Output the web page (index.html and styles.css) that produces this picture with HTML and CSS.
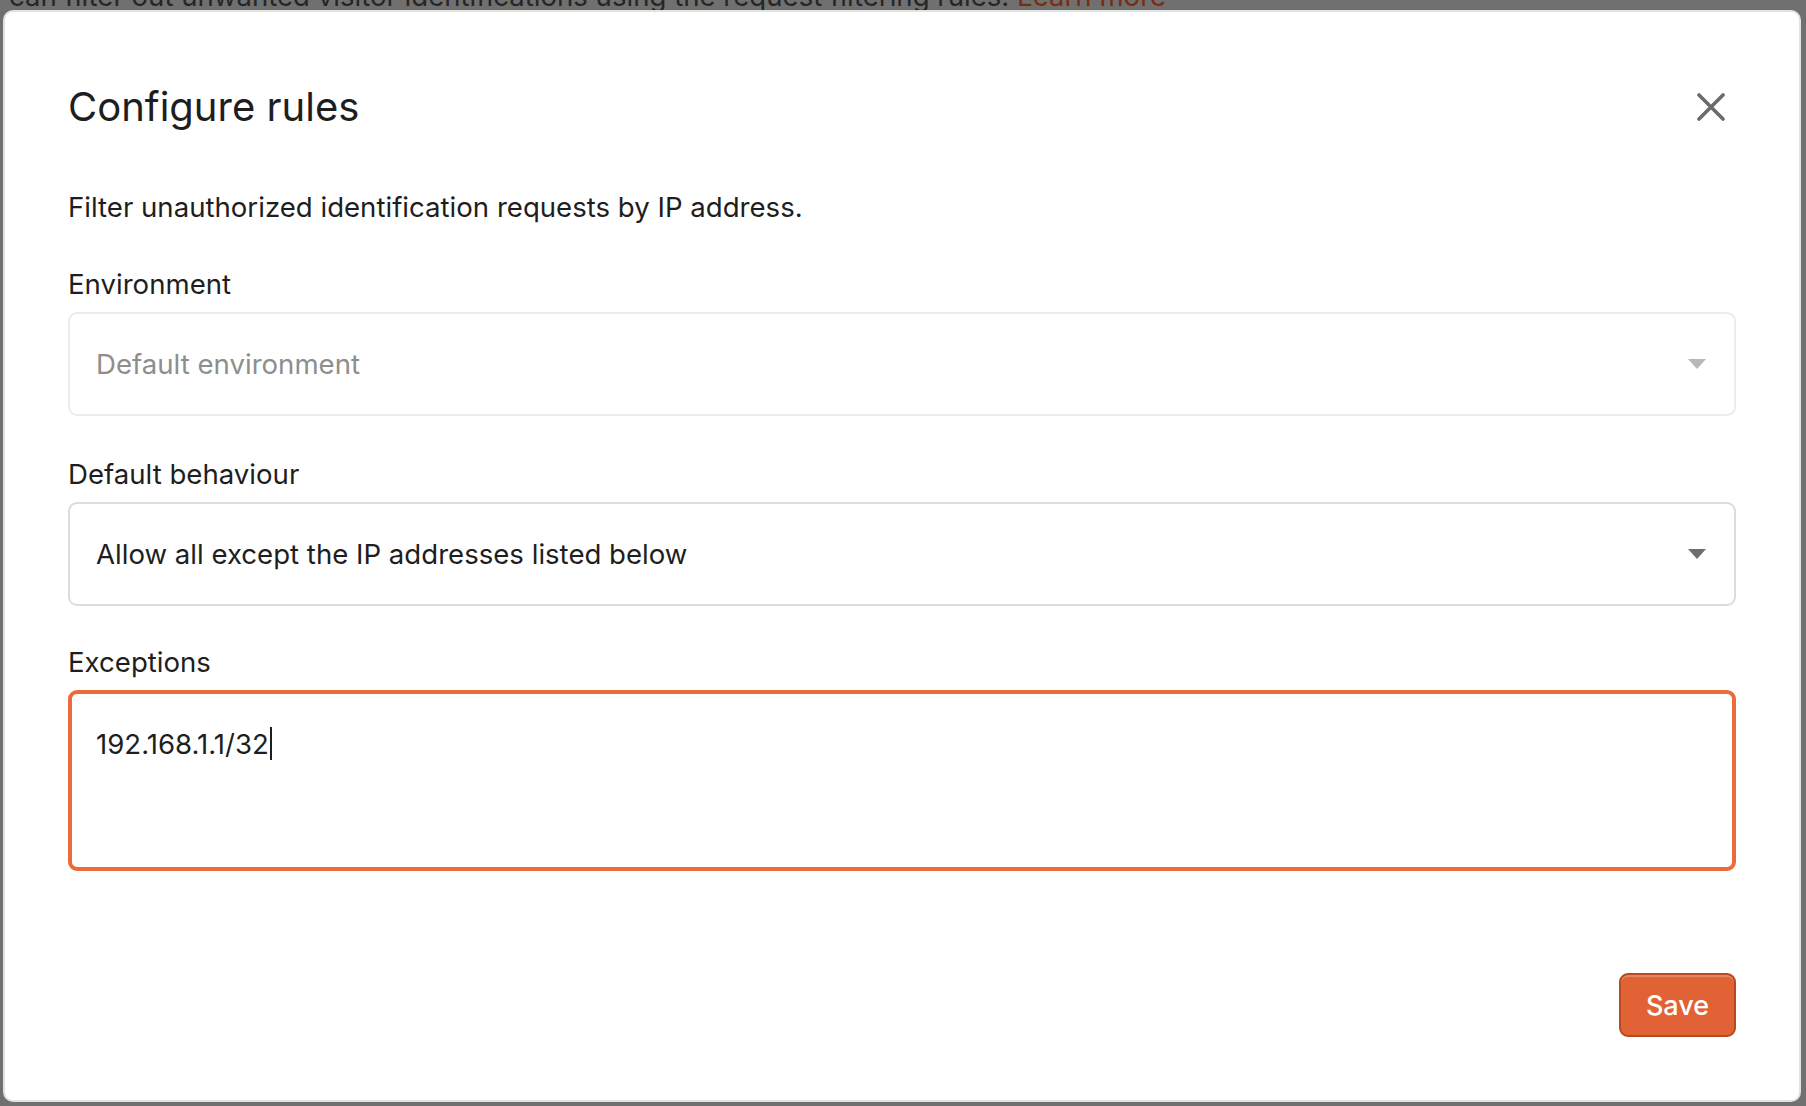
FILE: index.html
```html
<!DOCTYPE html>
<html lang="en">
<head>
<meta charset="utf-8">
<title>Configure rules</title>
<link rel="stylesheet" href="styles.css">
</head>
<body>
<div class="page">
  <p class="page-text">can filter out unwanted visitor identifications using the request filtering rules. <a class="page-link" href="#">Learn more</a></p>
</div>
<div class="overlay">
  <div class="modal" role="dialog" aria-labelledby="modal-title">
    <div class="modal-header">
      <h2 class="modal-title" id="modal-title">Configure rules</h2>
      <button class="close-btn" type="button" aria-label="Close">
        <svg width="28" height="28" viewBox="0 0 28 28" aria-hidden="true">
          <path d="M2 2 L26 26 M26 2 L2 26" stroke="#6b6b6b" stroke-width="3.6" stroke-linecap="round" fill="none"/>
        </svg>
      </button>
    </div>
    <p class="modal-desc">Filter unauthorized identification requests by IP address.</p>

    <div class="field field-env">
      <div class="field-label">Environment</div>
      <div class="select select-disabled">
        <span class="select-value placeholder">Default environment</span>
        <span class="select-arrow arrow-light"></span>
      </div>
    </div>

    <div class="field field-behaviour">
      <div class="field-label">Default behaviour</div>
      <div class="select">
        <span class="select-value">Allow all except the IP addresses listed below</span>
        <span class="select-arrow"></span>
      </div>
    </div>

    <div class="field field-exceptions">
      <div class="field-label">Exceptions</div>
      <div class="textarea"><span class="textarea-text">192.168.1.1/32</span><span class="caret"></span></div>
    </div>

    <div class="modal-footer">
      <button class="save-btn" type="button">Save</button>
    </div>
  </div>
</div>
</body>
</html>
```

FILE: styles.css
```css
html, body {
  margin: 0;
  padding: 0;
  height: 100%;
}

body {
  background: #707070;
  font-family: "Inter", "Liberation Sans", sans-serif;
  overflow: hidden;
}

.page {
  padding: 0 9px;
}

.page-text {
  margin: -20px 0 0 0;
  font-size: 27.6px;
  line-height: 33px;
  color: #262626;
  white-space: nowrap;
}

.page-link {
  color: #7a2c10;
  text-decoration: none;
}

.overlay {
  position: fixed;
  top: 10px;
  left: 3px;
  right: 5px;
  bottom: 4px;
}

.modal {
  box-sizing: border-box;
  height: 100%;
  background: #ffffff;
  border: 2px solid #e2e2df;
  border-radius: 10px;
  padding: 70px 63px 0 63px;
  display: flex;
  flex-direction: column;
}

.modal-header {
  display: flex;
  align-items: center;
  justify-content: space-between;
  height: 50px;
}

.modal-title {
  margin: 0;
  font-size: 40px;
  font-weight: 400;
  line-height: 50px;
  color: #1e1e1e;
}

.close-btn {
  width: 48px;
  height: 48px;
  padding: 0;
  margin-right: 1px;
  border: none;
  background: transparent;
  display: flex;
  align-items: center;
  justify-content: center;
}

.modal-desc {
  margin: 57px 0 0 0;
  font-size: 27.6px;
  line-height: 36px;
  color: #1e1e1e;
}

.field {
  display: flex;
  flex-direction: column;
}

.field-env {
  margin-top: 41px;
}

.field-behaviour {
  margin-top: 40px;
}

.field-exceptions {
  margin-top: 38px;
}

.field-label {
  font-size: 27.6px;
  line-height: 36px;
  color: #1e1e1e;
  margin-bottom: 10px;
}

.select {
  box-sizing: border-box;
  height: 104px;
  border: 2px solid #dcdcdc;
  border-radius: 9px;
  display: flex;
  align-items: center;
  justify-content: space-between;
  padding: 0 28px 0 26px;
}

.select-disabled {
  border-color: #ececec;
}

.select-value {
  font-size: 27.6px;
  line-height: 36px;
  color: #1e1e1e;
}

.placeholder {
  color: #8e8e8e;
}

.select-arrow {
  width: 0;
  height: 0;
  border-left: 9.5px solid transparent;
  border-right: 9.5px solid transparent;
  border-top: 10px solid #6e6e6e;
}

.arrow-light {
  border-top-color: #b8b8b8;
}

.textarea {
  box-sizing: border-box;
  height: 181px;
  border: 4px solid #ec6b3a;
  border-radius: 9px;
  padding: 32px 24px 0 24px;
  font-size: 27.6px;
  line-height: 36px;
  color: #1e1e1e;
  display: flex;
  align-items: flex-start;
}

.caret {
  display: inline-block;
  width: 2px;
  height: 33px;
  margin-top: 1px;
  margin-left: 1px;
  background: #1e1e1e;
}

.modal-footer {
  margin-top: 102px;
  display: flex;
  justify-content: flex-end;
}

.save-btn {
  box-sizing: border-box;
  width: 117px;
  height: 64px;
  border: 2px solid #b9491f;
  border-radius: 9px;
  background: #e16335;
  box-shadow: inset 0 2px 0 rgba(255, 255, 255, 0.22);
  color: #ffffff;
  font-family: "Inter", "Liberation Sans", sans-serif;
  font-size: 27px;
  font-weight: 500;
  padding: 0;
}
```
